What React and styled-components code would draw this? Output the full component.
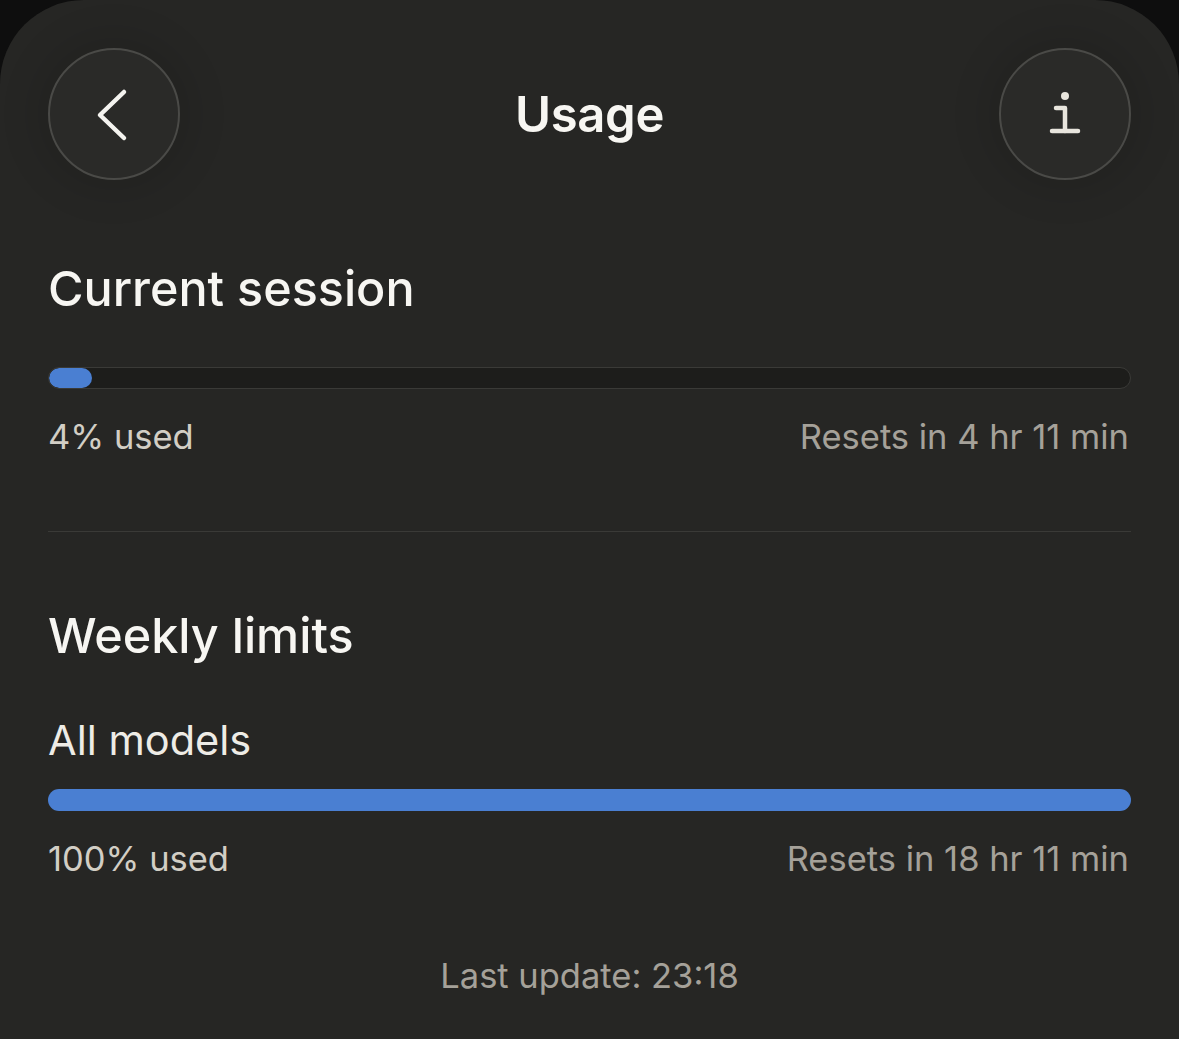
import styled, { createGlobalStyle } from "styled-components";

const GlobalStyle = createGlobalStyle`
  html, body {
    margin: 0;
    padding: 0;
    background: #0e0e0e;
  }
  body {
    font-family: Inter, "Noto Sans", "Liberation Sans", sans-serif;
    -webkit-font-smoothing: antialiased;
  }
`;

const Sheet = styled.div`
  background: #262624;
  height: 1039px;
  box-sizing: border-box;
  border-radius: 84px 84px 0 0;
  padding: 48px 48px 0 48px;
  display: flex;
  flex-direction: column;
`;

const Header = styled.div`
  display: flex;
  align-items: center;
  justify-content: space-between;
  height: 132px;
`;

const RoundButton = styled.button`
  width: 132px;
  height: 132px;
  border-radius: 50%;
  border: 2px solid #4a4a47;
  background: #2a2a28;
  box-shadow: 0 0 40px 10px rgba(0, 0, 0, 0.12);
  display: flex;
  align-items: center;
  justify-content: center;
  padding: 0;
  color: #f2f0ea;
`;

const Title = styled.h1`
  margin: 0;
  font-size: 49px;
  font-weight: 600;
  color: #f7f6f2;
  letter-spacing: -0.3px;
`;

const SectionTitle = styled.h2`
  margin: ${(p) => p.$top}px 0 0 0;
  font-size: 48.5px;
  line-height: 58px;
  font-weight: 500;
  color: #f7f6f2;
`;

const Track = styled.div`
  height: 22px;
  border-radius: 11px;
  background: ${(p) => (p.$full ? "#4a7fd2" : "#1d1d1b")};
  border: ${(p) => (p.$full ? "none" : "1px solid #3a3a37")};
  box-sizing: border-box;
  margin-top: ${(p) => p.$top}px;
  overflow: hidden;
  display: flex;
`;

const Fill = styled.div`
  height: 100%;
  background: #4a7fd2;
  border-radius: 11px;
`;

const MetaRow = styled.div`
  display: flex;
  justify-content: space-between;
  align-items: center;
  margin-top: 27px;
  font-size: 34.5px;
  line-height: 42px;
`;

const Used = styled.span`
  color: #d2cec5;
`;

const Resets = styled.span`
  color: #a5a199;
  margin-right: 2px;
`;

const Divider = styled.hr`
  border: none;
  border-top: 1px solid #3a3a37;
  margin: 73px 0 0 0;
`;

const SubTitle = styled.div`
  margin-top: 50px;
  font-size: 41.5px;
  line-height: 50px;
  color: #eeece6;
  font-weight: 400;
`;

const Footer = styled.div`
  text-align: center;
  margin-top: 75px;
  font-size: 34.5px;
  line-height: 42px;
  color: #a5a199;
`;

const Usage = ({ pct, resets, top, full }) => (
  <>
    <Track $top={top} $full={full}>
      {!full && <Fill style={{ width: `${(pct / 100) * 1083}px` }} />}
    </Track>
    <MetaRow>
      <Used>{pct}% used</Used>
      <Resets>{resets}</Resets>
    </MetaRow>
  </>
);

export default function App() {
  return (
    <>
      <GlobalStyle />
      <Sheet>
        <Header>
          <RoundButton aria-label="Back">
            <svg width="40" height="60" viewBox="0 0 40 60" fill="none">
              <path d="M30 8 L6 31 L30 54" stroke="#f4f3ef" strokeWidth="4.5" strokeLinecap="round" strokeLinejoin="round" />
            </svg>
          </RoundButton>
          <Title>Usage</Title>
          <RoundButton aria-label="Info">
            <svg width="40" height="60" viewBox="0 0 40 60" fill="none">
              <circle cx="20" cy="12" r="4" fill="#e8e5dd" />
              <path d="M11 24 H20 V47" stroke="#e8e5dd" strokeWidth="4.5" strokeLinecap="round" strokeLinejoin="round" />
              <path d="M7 47 H33" stroke="#e8e5dd" strokeWidth="4.5" strokeLinecap="round" />
            </svg>
          </RoundButton>
        </Header>

        <SectionTitle $top={80}>Current session</SectionTitle>
        <Usage pct={4} resets="Resets in 4 hr 11 min" top={49} />

        <Divider />

        <SectionTitle $top={75}>Weekly limits</SectionTitle>
        <SubTitle>All models</SubTitle>
        <Usage pct={100} resets="Resets in 18 hr 11 min" top={24} full />

        <Footer>Last update: 23:18</Footer>
      </Sheet>
    </>
  );
}
